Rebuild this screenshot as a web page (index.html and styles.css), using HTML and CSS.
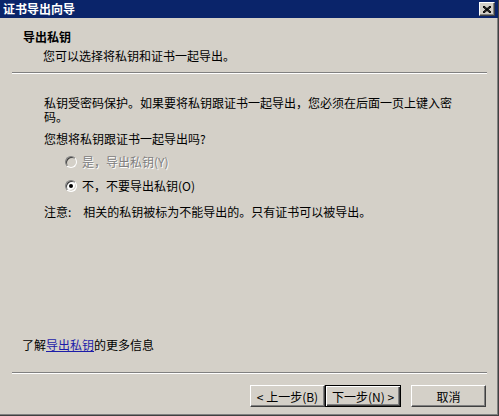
FILE: index.html
```html
<!DOCTYPE html>
<html lang="zh-CN">
<head>
    <meta charset="UTF-8">
    <title>证书导出向导</title>
    <link rel="stylesheet" href="styles.css">
</head>
<body>
    <div class="window">
        <div class="titlebar">
            <span class="title">证书导出向导</span>
            <button class="close-btn">
                <svg width="8" height="7" viewBox="0 0 8 7">
                    <path d="M0 0 L8 7 M1 0 L8 6 M0 1 L7 7 M8 0 L0 7 M7 0 L0 6 M8 1 L1 7" stroke="#000" stroke-width="1" fill="none"/>
                </svg>
            </button>
        </div>

        <div class="header">
            <h1>导出私钥</h1>
            <p class="subtitle">您可以选择将私钥和证书一起导出。</p>
        </div>
        <div class="separator"></div>

        <div class="content">
            <p class="intro">私钥受密码保护。如果要将私钥跟证书一起导出，您必须在后面一页上键入密码。</p>
            <p class="question">您想将私钥跟证书一起导出吗?</p>

            <div class="options">
                <label class="option disabled">
                    <input type="radio" name="export" disabled>
                    <span>是，导出私钥(Y)</span>
                </label>
                <label class="option">
                    <input type="radio" name="export" checked>
                    <span>不，不要导出私钥(O)</span>
                </label>
            </div>

            <p class="note">注意:&emsp;相关的私钥被标为不能导出的。只有证书可以被导出。</p>

            <p class="learn-more">了解<a href="#">导出私钥</a>的更多信息</p>
        </div>

        <div class="separator"></div>
        <div class="buttons">
            <button class="btn">&lt; 上一步(B)</button>
            <button class="btn btn-default">下一步(N) &gt;</button>
            <button class="btn btn-cancel">取消</button>
        </div>
    </div>
</body>
</html>
```

FILE: styles.css
```css
* {
    margin: 0;
    padding: 0;
    box-sizing: border-box;
}

body {
    font-family: "Noto Sans CJK SC", "Liberation Sans", sans-serif;
    font-size: 12px;
    line-height: 14px;
    color: #000;
    background-color: #d4d0c8;
    width: 499px;
    height: 416px;
    overflow: hidden;
}

.window {
    height: 416px;
    display: flex;
    flex-direction: column;
    border-bottom: 1px solid #404040;
    border-right: 1px solid #404040;
    box-shadow: inset -1px -1px #808080;
}

.titlebar {
    height: 18px;
    background-color: #0a246a;
    display: flex;
    justify-content: space-between;
    align-items: center;
    padding: 0 2px 0 3px;
}

.title {
    color: white;
    font-weight: bold;
}

.close-btn {
    width: 16px;
    height: 14px;
    background: #d4d0c8;
    border: 1px solid;
    border-color: #fff #404040 #404040 #fff;
    box-shadow: inset -1px -1px #808080;
    display: flex;
    align-items: center;
    justify-content: center;
    margin-right: 1px;
}

.header {
    padding: 12px 0 0 23px;
}

.header h1 {
    font-size: 12px;
    font-weight: bold;
}

.subtitle {
    margin: 5px 0 0 20px;
}

.separator {
    height: 2px;
    margin: 9px 11px 0 12px;
    border-top: 1px solid #808080;
    border-bottom: 1px solid #fff;
}

.content {
    flex: 1;
    display: flex;
    flex-direction: column;
    padding-left: 44px;
}

.intro {
    margin-top: 22px;
    width: 412px;
}

.question {
    margin-top: 8px;
}

.options {
    display: flex;
    flex-direction: column;
    gap: 10px;
    margin: 9px 0 0 21px;
}

.option {
    display: flex;
    align-items: center;
    gap: 5px;
    height: 14px;
}

.option input {
    appearance: none;
    width: 12px;
    height: 12px;
    border-radius: 50%;
    border: 1px solid;
    border-color: #808080 #fff #fff #808080;
    box-shadow: inset 1px 1px #404040, inset -1px -1px #d4d0c8;
    background: #fff;
    position: relative;
}

.option input:checked::after {
    content: "";
    position: absolute;
    left: 3px;
    top: 3px;
    width: 4px;
    height: 4px;
    border-radius: 50%;
    background: #000;
}

.option.disabled input {
    background: #d4d0c8;
}

.option.disabled span {
    color: #808080;
    text-shadow: 1px 1px #fff;
}

.note {
    margin-top: 12px;
}

.learn-more {
    margin: auto 0 11px -22px;
}

.learn-more a {
    color: #1c1ca8;
    text-decoration: underline;
}

.buttons {
    display: flex;
    justify-content: flex-end;
    padding: 11px 12px 8px 0;
}

.btn {
    font-family: inherit;
    font-size: 12px;
    width: 75px;
    height: 22px;
    background: #d4d0c8;
    border: 1px solid;
    border-color: #fff #404040 #404040 #fff;
    box-shadow: inset -1px -1px #808080;
}

.btn-default {
    width: 76px;
    border: 1px solid #000;
    box-shadow: inset 1px 1px #fff, inset -1px -1px #404040, inset -2px -2px #808080;
}

.btn-cancel {
    margin-left: 10px;
}
```
